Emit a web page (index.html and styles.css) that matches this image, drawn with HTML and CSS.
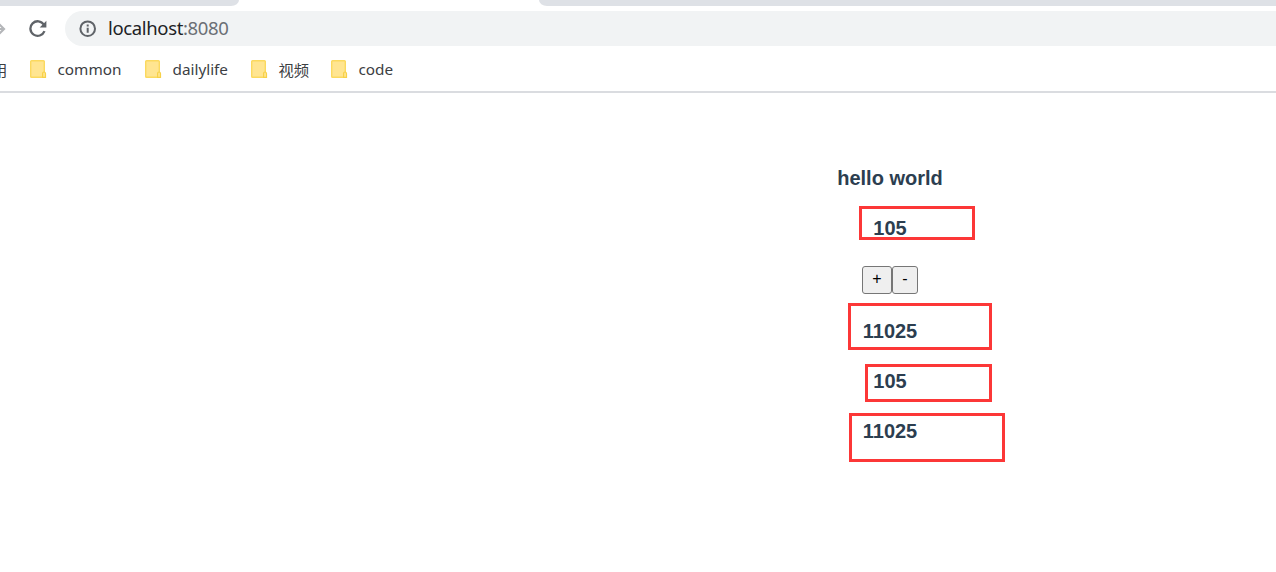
FILE: index.html
```html
<!DOCTYPE html>
<html lang="en">
<head>
<meta charset="utf-8">
<title>localhost:8080</title>
<link rel="stylesheet" href="styles.css">
</head>
<body>
<header class="browser">
  <div class="tabstrip"><div class="tab-left"></div><div class="tab-right"></div></div>
  <div class="toolbar">
    <svg class="forward" width="6" height="14" viewBox="0 0 6 14"><path d="M-2 7H4M-1.5 1.5L4 7L-1.5 12.5" fill="none" stroke="#b4b6b9" stroke-width="2.2"/></svg>
    <svg class="reload" width="18" height="18" viewBox="0 0 18 18"><path d="M14.9 4.7A7.3 7.3 0 1 0 15.5 11.2" fill="none" stroke="#5f6368" stroke-width="2.3"/><path d="M17.4 .7V7.4H10.7Z" fill="#5f6368"/></svg>
    <div class="omnibox">
      <svg class="info" width="18" height="18" viewBox="0 0 18 18"><circle cx="8.7" cy="8.7" r="7.3" fill="none" stroke="#5f6368" stroke-width="2"/><path d="M8.7 7.7V12.7M8.7 4.5V6.4" stroke="#5f6368" stroke-width="2"/></svg>
      <span class="url">localhost<span class="port">:8080</span></span>
    </div>
  </div>
  <nav class="bookmarks">
    <span class="apps">用</span>
    <span class="bookmark common"><svg class="folder" width="17" height="19" viewBox="0 0 17 19"><rect x=".7" y=".7" width="13.6" height="16.6" rx=".8" fill="#ffe591" stroke="#fbd95f" stroke-width="1.4"/><path d="M12.6 17.3V13.5Q12.6 12 14 12T15.5 13.5V17.3Z" fill="#ffe591" stroke="#f7d148" stroke-width="1.2"/></svg><span class="label">common</span></span>
    <span class="bookmark daily"><svg class="folder" width="17" height="19" viewBox="0 0 17 19"><rect x=".7" y=".7" width="13.6" height="16.6" rx=".8" fill="#ffe591" stroke="#fbd95f" stroke-width="1.4"/><path d="M12.6 17.3V13.5Q12.6 12 14 12T15.5 13.5V17.3Z" fill="#ffe591" stroke="#f7d148" stroke-width="1.2"/></svg><span class="label">dailylife</span></span>
    <span class="bookmark video"><svg class="folder" width="17" height="19" viewBox="0 0 17 19"><rect x=".7" y=".7" width="13.6" height="16.6" rx=".8" fill="#ffe591" stroke="#fbd95f" stroke-width="1.4"/><path d="M12.6 17.3V13.5Q12.6 12 14 12T15.5 13.5V17.3Z" fill="#ffe591" stroke="#f7d148" stroke-width="1.2"/></svg><span class="label">视频</span></span>
    <span class="bookmark"><svg class="folder" width="17" height="19" viewBox="0 0 17 19"><rect x=".7" y=".7" width="13.6" height="16.6" rx=".8" fill="#ffe591" stroke="#fbd95f" stroke-width="1.4"/><path d="M12.6 17.3V13.5Q12.6 12 14 12T15.5 13.5V17.3Z" fill="#ffe591" stroke="#f7d148" stroke-width="1.2"/></svg><span class="label">code</span></span>
  </nav>
</header>
<main class="app">
  <h3 class="line">hello world</h3>
  <h3 class="line">105</h3>
  <div class="buttons"><button class="plus">+</button><button class="minus">-</button></div>
  <h3 class="line">11025</h3>
  <h3 class="line">105</h3>
  <h3 class="line">11025</h3>
</main>
<div class="mark mark-count"></div>
<div class="mark mark-square"></div>
<div class="mark mark-count-copy"></div>
<div class="mark mark-square-copy"></div>
</body>
</html>
```
FILE: styles.css
```css
* { box-sizing: border-box; }
body { margin: 0; height: 572px; overflow: hidden; position: relative; background: #fff; }
svg { display: block; flex: none; }
.browser { height: 93px; border-bottom: 2px solid #dadce0; font-family: "Noto Sans", "Noto Sans CJK SC", sans-serif; }
.tabstrip { height: 6px; display: flex; justify-content: space-between; }
.tab-left { width: 239px; background: #dee1e6; border-bottom-right-radius: 8px 6px; }
.tab-right { width: 737px; background: #dee1e6; border-bottom-left-radius: 8px 6px; }
.toolbar { height: 45px; display: flex; align-items: center; }
.reload { margin-left: 23px; }
.omnibox { margin-left: 18px; flex: 1; height: 35px; border-radius: 18px 0 0 18px; background: #f1f3f4; display: flex; align-items: center; padding-left: 14px; }
.url { margin-left: 11px; padding-bottom: 2px; font-size: 18.5px; line-height: 33px; letter-spacing: -.35px; color: #202124; white-space: nowrap; }
.port { color: #6b6f74; }
.bookmarks { height: 37px; display: flex; align-items: center; font-size: 15.3px; color: #3c4043; white-space: nowrap; }
.apps { width: 30px; flex: none; text-indent: -8px; padding-bottom: 2px; }
.bookmark { display: flex; align-items: center; gap: 10.5px; }
.label { padding-bottom: 2px; }
.common { width: 115px; }
.daily { width: 106px; }
.video { width: 80px; }
.app { padding: 74px 0 0 504px; display: flex; flex-direction: column; align-items: center; color: #2c3e50; font-family: "Liberation Sans", Arial, sans-serif; }
.line { margin: 0 0 27px; font-size: 20px; line-height: 23px; font-weight: bold; }
.buttons { height: 28px; display: flex; margin: -1px 0 26px; }
.buttons button { height: 28px; padding: 0 0 2px; border: 1px solid #767676; border-radius: 3px; background: #efefef; font: 16px "Liberation Sans", Arial, sans-serif; color: #000; }
.buttons .plus { width: 30px; }
.buttons .minus { width: 26px; }
.mark { position: absolute; border: 3px solid #fc3737; }
.mark-count { left: 859px; top: 206px; width: 116px; height: 34px; }
.mark-square { left: 848px; top: 303px; width: 144px; height: 47px; }
.mark-count-copy { left: 865px; top: 364px; width: 127px; height: 38px; }
.mark-square-copy { left: 849px; top: 413px; width: 156px; height: 49px; }
```
